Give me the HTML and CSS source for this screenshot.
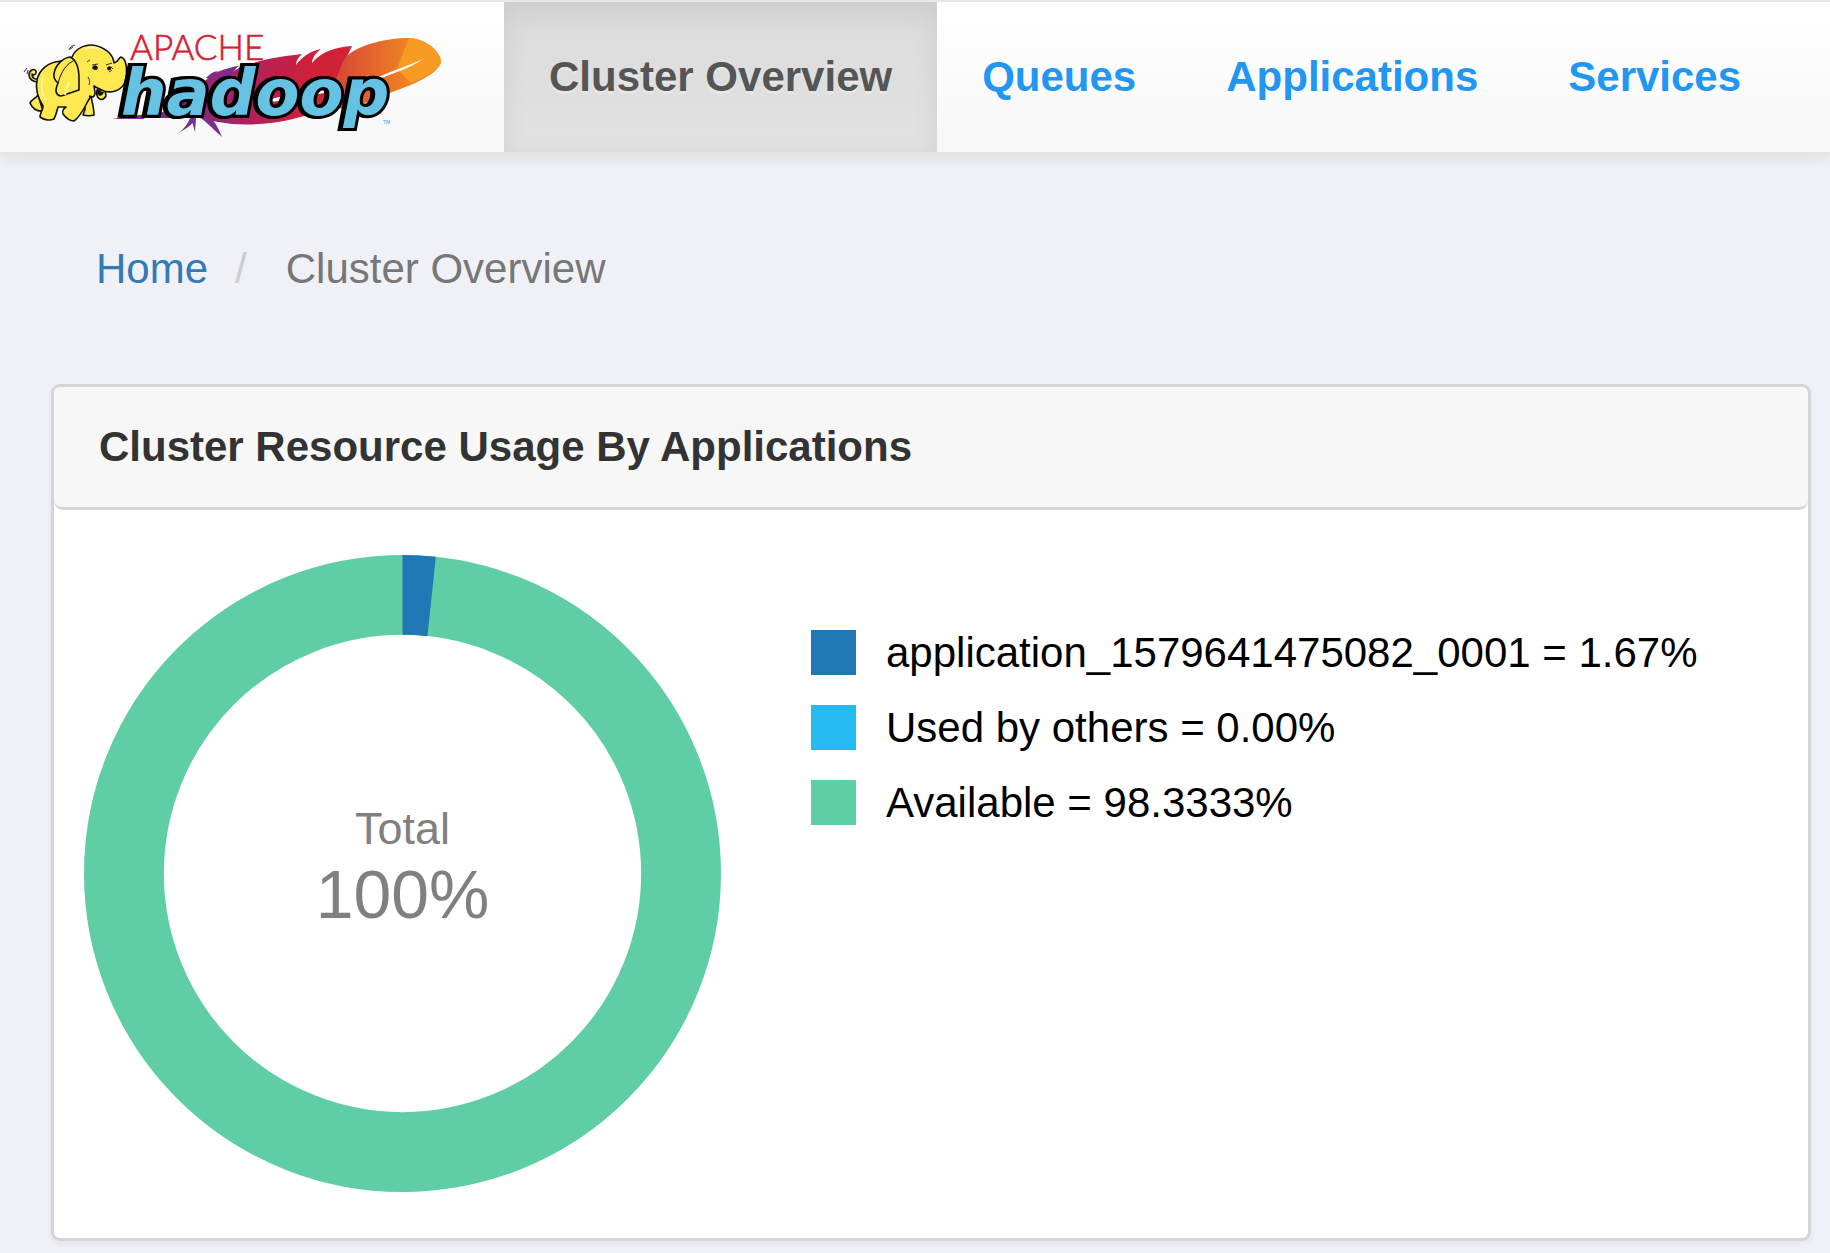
FILE: index.html
```html
<!DOCTYPE html>
<html lang="en">
<head>
    <meta charset="UTF-8">
    <meta name="viewport" content="width=device-width, initial-scale=1.0">
    <title>Cluster Overview</title>
    <link rel="stylesheet" href="styles.css">
</head>
<body>
    <nav class="navbar">
        <a class="brand" href="#" aria-label="Apache Hadoop">
            <svg class="logo" viewBox="0 2 504 150">
                <defs>
                    <linearGradient id="feather" gradientUnits="userSpaceOnUse" x1="180" y1="0" x2="345" y2="0">
                        <stop offset="0" stop-color="#7c2a86"/>
                        <stop offset="0.4" stop-color="#b02060"/>
                        <stop offset="0.8" stop-color="#cf2138"/>
                        <stop offset="1" stop-color="#d02336"/>
                    </linearGradient>
                    <linearGradient id="featherTip" gradientUnits="userSpaceOnUse" x1="340" y1="0" x2="405" y2="0">
                        <stop offset="0" stop-color="#d84a33"/>
                        <stop offset="1" stop-color="#ee8126"/>
                    </linearGradient>
                </defs>

                <!-- feather -->
                <path fill="url(#feather)" d="M150 118 C175 108 188 92 206 80 C216 70 228 68 240 66 C226 71 220 76 218 80 C232 74 235 68 250 64 C268 58 285 56 302 54 C298 58 296 61 296 65 C302 57 310 51 321 49 C315 54 312 58 312 63 C322 51 336 47 352 46 L337 78 L330 105 C300 122 260 126 232 124 C218 122 205 120 200 118 Z"/>
                <path fill="url(#featherTip)" d="M337 78 C340 68 342 63 344 60 C352 46 385 38 409 38 C428 39 441 53 441 62 C438 74 415 84 392 92 C375 101 350 108 330 110 Z"/>
                <path fill="#f79b23" d="M409 38 C428 39 441 53 441 62 C438 71 424 78 411 83 L397 69 Z"/>
                <path fill="#fff" d="M376 78 C394 70 408 66 423 59 C410 68 396 72 382 78 Z"/>
                <path fill="#fff" d="M268 99 C278 98 290 94 324 90 L324 93 C296 98 284 101 268 102 Z"/>
                <path fill="#7b2f8c" d="M206 78 C211 73 213 72 218 71 L211 79 Z M217 79 C222 70 230 67 238 66 L228 79 Z M190 118 C188 124 184 128 179 133 C185 129 191 126 196 119 Z M191 118 L195 132 L196 118 Z M199 117 C207 122 214 130 222 137 C219 130 217 125 212 119 Z M112 119 L146 114 L144 119 Z"/>

                <!-- elephant -->
                <g fill="#fde94f" stroke="#111" stroke-width="1.6" stroke-linejoin="round" stroke-linecap="round">
                    <path d="M84 102 C87 108 84 112 83 115 C87 116 91 116 94 115 C94 108 92 102 91 96 Z"/>
                    <path d="M38 95 C35 99 31 100 30 103 C32 108 37 112 43 111 Z"/>
                    <path d="M38 82 C33 82 29 79 29 75 C29 70 34 68 36 71 C37 74 34 76 32 74 C32 79 36 80 39 78"/>
                    <path d="M61 61 C48 62 39 70 37 80 C35 90 38 98 43 106 C43 110 40 113 40 117 C44 120 50 121 54 119 C56 115 57 111 58 107 L66 107 C63 109 62 112 63 114 C66 118 70 121 74 121 C80 117 84 109 88 101 L93 92 L82 62 Z"/>
                    <path d="M97 90 C95 98 102 103 106 96 L105 90 Z"/>
                    <path d="M72 57 C76 47 88 43 97 46 C107 49 113 55 114 63 C119 62 118 58 121 57 C127 59 128 73 125 82 C121 92 110 93 104 91 C100 89 97 88 94 86 C95 92 96 95 93 97 C88 96 84 94 80 90 L68 72 Z"/>
                    <path d="M73 86 L73 76 L82 80 L92 88 L88 99 C82 97 76 93 73 86 Z" stroke="none"/>
                    <path d="M54 74 C55 66 62 58 70 57 C77 60 79 70 79 79 L79 90 C72 92 66 95 61 96 C55 95 55 90 58 83 C56 81 53 79 54 74 Z"/>
                    <path d="M58 83 C60 77 63 66 73 61" fill="none" stroke-width="1"/>
                </g>
                <path d="M65 95 C66 89 67 86 69 82 M43 78 C40 88 43 96 46 100 M102 50 C97 47 90 47 85 49" fill="none" stroke="#fff6a0" stroke-width="2"/>
                <path d="M92 68 C94 64 97 65 98 68 C97 71 93 70 92 68 Z M107 68 C109 65 112 66 111 69 C110 71 107 71 107 68 Z M97 88 C99 91 102 92 104 92 C103 96 99 97 97 94 Z" fill="#111"/>
                <path d="M87 62 L90 60 M106 65 L112 63 M111 67 L113 69 M109 72 L112 70 M88 77 C90 80 90 83 89 85 M69 50 C70 47 72 46 75 45 M70 49 L73 47 M24 72 L27 68 M27 74 L28 70 M92 65 L98 64" fill="none" stroke="#333" stroke-width="1"/>

                <text class="logo-apache" x="130" y="60">APACHE</text>
                <text class="logo-hadoop" x="121" y="115">hadoop</text>
                <text class="logo-tm" x="383" y="124">TM</text>
            </svg>
        </a>
        <ul class="nav">
            <li><a class="active" href="#">Cluster Overview</a></li>
            <li><a href="#">Queues</a></li>
            <li><a href="#">Applications</a></li>
            <li><a href="#">Services</a></li>
        </ul>
    </nav>

    <main class="content">
        <ol class="breadcrumb">
            <li><a href="#">Home</a></li>
            <li>Cluster Overview</li>
        </ol>

        <section class="panel">
            <h1 class="panel-heading">Cluster Resource Usage By Applications</h1>
            <div class="panel-body">
                <svg class="donut" viewBox="0 0 638 638">
                    <!-- ring radius 279, 1.67% slice starts at 12 o'clock -->
                    <circle class="ring available" cx="319" cy="319" r="279"/>
                    <circle class="ring application" cx="319" cy="319" r="279" pathLength="100" stroke-dasharray="1.67 98.33" transform="rotate(-90 319 319)"/>
                    <text class="donut-label" x="319" y="289">Total</text>
                    <text class="donut-value" x="319" y="364">100%</text>
                </svg>
                <ul class="legend">
                    <li><span class="swatch application"></span>application_1579641475082_0001 = 1.67%</li>
                    <li><span class="swatch others"></span>Used by others = 0.00%</li>
                    <li><span class="swatch available"></span>Available = 98.3333%</li>
                </ul>
            </div>
        </section>
    </main>
</body>
</html>
```
FILE: styles.css
```css
* {
    box-sizing: border-box;
}
body {
    margin: 0;
    background-color: #f0f1f7;
    color: #333;
    font-family: "Liberation Sans", Arial, sans-serif;
    font-size: 42px;
    line-height: 60px;
}
ul, ol {
    list-style: none;
    margin: 0;
    padding: 0;
}
a {
    text-decoration: none;
}

/* Top bar */
.navbar {
    display: flex;
    border-top: 2px solid #e7e7e7;
    border-bottom: 3px solid #e5e5e6;
    background: linear-gradient(to bottom, #fff, #f7f7f7);
    box-shadow: 0 3px 15px rgba(0, 0, 0, 0.075);
}
.brand, .logo {
    display: block;
    width: 504px;
    height: 150px;
}
.nav {
    display: flex;
}
.nav a {
    display: block;
    padding: 45px;
    color: #2196f3;
    font-weight: bold;
    text-shadow: 0 3px 0 rgba(255, 255, 255, 0.25);
    white-space: nowrap;
}
.nav a.active {
    color: #555;
    background: linear-gradient(to bottom, #dbdbdb, #e2e2e2);
    box-shadow: inset 0 9px 27px rgba(0, 0, 0, 0.075);
}
.logo-apache {
    font-family: Lato, sans-serif;
    font-weight: 300;
    font-size: 35px;
    fill: #d6202f;
    stroke: #d6202f;
    stroke-width: 0.6px;
}
.logo-hadoop {
    font-family: "DejaVu Sans", sans-serif;
    font-weight: bold;
    font-style: italic;
    font-size: 64px;
    fill: #66c2e3;
    stroke: #000;
    stroke-width: 6px;
    stroke-linejoin: miter;
    paint-order: stroke;
    filter: drop-shadow(-2px 0 0 #000);
}
.logo-tm {
    font-weight: bold;
    font-size: 5px;
    fill: #66c2e3;
}

/* Page */
.content {
    padding: 84px 19px 12px 51px;
}
.breadcrumb {
    display: flex;
    padding: 0 45px;
    margin-bottom: 85px;
    color: #777;
}
.breadcrumb a {
    color: #337ab7;
}
.breadcrumb li + li::before {
    content: "/";
    padding: 0 39px 0 27px;
    color: #ccc;
}
.panel {
    border: 3px solid #d5d5d5;
    border-radius: 9px;
    background-color: #fff;
    box-shadow: 0 3px 6px rgba(0, 0, 0, 0.05);
}
.panel-heading {
    margin: 0;
    padding: 30px 45px;
    border-bottom: 3px solid #d5d5d5;
    border-radius: 9px;
    background-color: #f7f7f7;
    font-size: 42px;
    line-height: 60px;
}
.panel-body {
    display: flex;
    align-items: flex-start;
    gap: 90px;
    padding: 45px 30px 46px;
}

/* Usage chart */
.donut {
    display: block;
    flex: none;
    width: 637px;
}
.ring {
    fill: none;
    stroke-width: 80px;
}
.ring.available {
    stroke: #60cea5;
}
.ring.application {
    stroke: #1f77b4;
}
.donut text {
    fill: #808080;
    text-anchor: middle;
}
.donut-label {
    font-size: 45px;
}
.donut-value {
    font-size: 68px;
}
.legend {
    display: grid;
    gap: 30px;
    padding-top: 75px;
    color: #000;
    line-height: 46px;
}
.legend li {
    display: flex;
    gap: 30px;
    height: 45px;
}
.swatch {
    flex: none;
    width: 45px;
    height: 45px;
}
.swatch.application {
    background-color: #1f77b4;
}
.swatch.others {
    background-color: #26bbf0;
}
.swatch.available {
    background-color: #60cea5;
}
```
